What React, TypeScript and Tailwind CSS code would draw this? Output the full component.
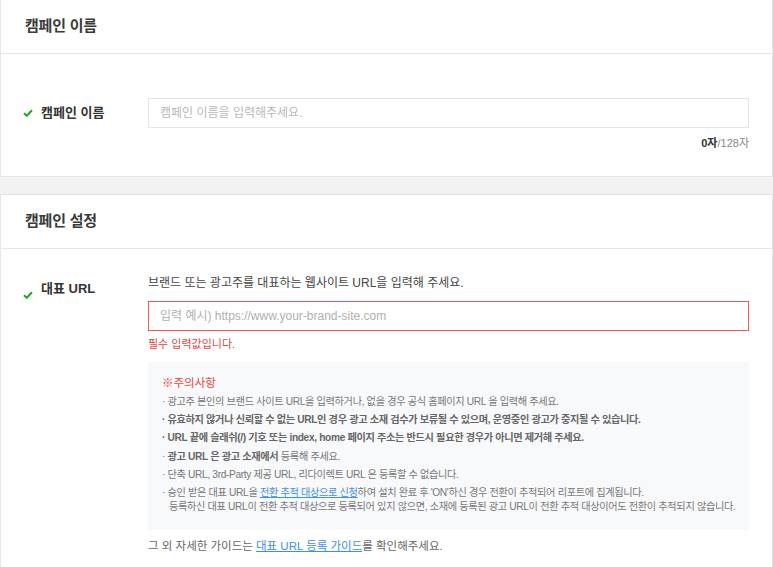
import React from "react";

const FONT = { fontFamily: '"Liberation Sans", "Noto Sans CJK KR", sans-serif' };

function Check() {
	return (
		<svg width="10" height="8" viewBox="0 0 10 8" className="shrink-0">
			<path d="M1 4.2 L3.8 6.8 L9 1.2" fill="none" stroke="#1fa824" strokeWidth="2" />
		</svg>
	);
}

function Label({ text, className = "" }: { text: string; className?: string }) {
	return (
		<div className={`w-[147px] shrink-0 pl-[22px] flex items-center gap-[8px] ${className}`}>
			<Check />
			<span className="text-[13px] font-bold text-[#333]">{text}</span>
		</div>
	);
}

function CardHeader({ title }: { title: string }) {
	return (
		<div className="h-[54px] border-b border-[#e6e6ea] pl-[24px] flex items-center">
			<h2 className="text-[15px] font-bold text-[#3a3a3a] tracking-[-0.2px]">{title}</h2>
		</div>
	);
}

export default function App() {
	return (
		<div className="min-h-[567px] bg-[#f2f2f2] text-[#333]" style={FONT}>
			<section className="bg-white border-x border-b border-[#e6e6ea]">
				<CardHeader title="캠페인 이름" />
				<div className="flex pt-[44px] pb-[24px]">
					<Label text="캠페인 이름" className="h-[30px]" />
					<div className="flex-1 min-w-0 pr-[23px]">
						<input
							className="w-full h-[30px] border border-[#e3e3e8] px-[11px] text-[12px] outline-none placeholder:text-[#b8b8b8]"
							placeholder="캠페인 이름을 입력해주세요."
						/>
						<p className="mt-[7px] text-right text-[11px] text-[#888]">
							<b className="text-[#333]">0자</b>/128자
						</p>
					</div>
				</div>
			</section>

			<section className="mt-[17px] bg-white border-x border-t border-[#e6e6ea]">
				<CardHeader title="캠페인 설정" />
				<div className="flex pt-[26px] pb-[20px]">
					<Label text="대표 URL" className="h-[24px] items-end self-start" />
					<div className="flex-1 min-w-0 pr-[23px]">
						<p className="text-[12px] text-[#444] leading-[16px]">
							브랜드 또는 광고주를 대표하는 웹사이트 URL을 입력해 주세요.
						</p>
						<input
							className="mt-[10px] w-full h-[30px] border border-[#ec5b5b] px-[11px] text-[12px] outline-none placeholder:text-[#b0b0b0]"
							placeholder="입력 예시) https://www.your-brand-site.com"
						/>
						<p className="mt-[6px] text-[11px] text-[#e8433d] leading-[14px]">필수 입력값입니다.</p>
						<div className="mt-[11px] bg-[#f8f9fb] pl-[14px] pr-[10px] pt-[14px] pb-[16px] text-[10.2px] leading-[14px] text-[#777] tracking-[-0.35px]">
							<p className="text-[11.5px] text-[#e8473a] mb-[5px] tracking-normal">※주의사항</p>
							<ul className="flex flex-col gap-[4.4px]">
								<li>· 광고주 본인의 브랜드 사이트 URL을 입력하거나, 없을 경우 공식 홈페이지 URL 을 입력해 주세요.</li>
								<li className="font-bold text-[#666]">
									· 유효하지 않거나 신뢰할 수 없는 URL인 경우 광고 소재 검수가 보류될 수 있으며, 운영중인 광고가 중지될 수 있습니다.
								</li>
								<li className="font-bold text-[#666]">
									· URL 끝에 슬래쉬(/) 기호 또는 index, home 페이지 주소는 반드시 필요한 경우가 아니면 제거해 주세요.
								</li>
								<li>
									· <b className="text-[#666]">광고 URL 은 광고 소재에서</b> 등록해 주세요.
								</li>
								<li>· 단축 URL, 3rd-Party 제공 URL, 리다이렉트 URL 은 등록할 수 없습니다.</li>
								<li>
									· 승인 받은 대표 URL을{" "}
									<a className="text-[#3d8fe8] underline">전환 추적 대상으로 신청</a>하여 설치 완료 후 'ON'하신 경우 전환이 추적되어 리포트에 집계됩니다.
									<br />
									<span className="pl-[7px]">
										등록하신 대표 URL이 전환 추적 대상으로 등록되어 있지 않으면, 소재에 등록된 광고 URL이 전환 추적 대상이어도 전환이 추적되지 않습니다.
									</span>
								</li>
							</ul>
						</div>
						<p className="mt-[8px] text-[11.5px] text-[#666] leading-[16px]">
							그 외 자세한 가이드는 <a className="text-[#3d8fe8] underline">대표 URL 등록 가이드</a>를 확인해주세요.
						</p>
					</div>
				</div>
			</section>
		</div>
	);
}
